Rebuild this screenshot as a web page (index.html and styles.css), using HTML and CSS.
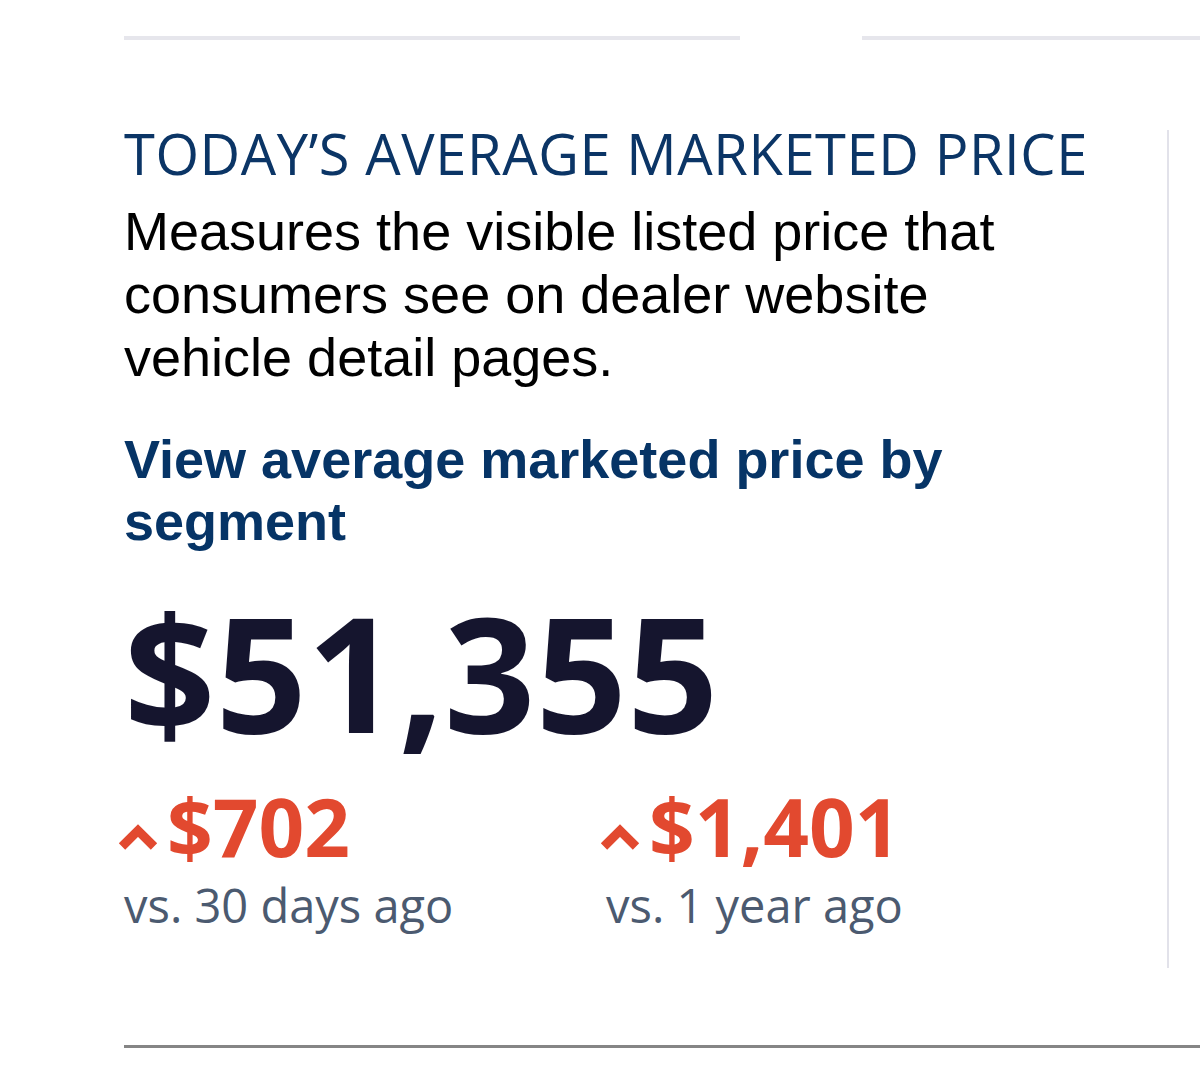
FILE: index.html
```html
<!DOCTYPE html>
<html lang="en">
<head>
    <meta charset="UTF-8">
    <meta name="viewport" content="width=device-width, initial-scale=1.0">
    <title>Average Marketed Price</title>
    <link rel="stylesheet" href="styles.css">
</head>
<body>
    <div class="page">
        <div class="top-rules">
            <span class="rule rule-left"></span>
            <span class="rule rule-right"></span>
        </div>

        <div class="stat-card">
            <h2 class="stat-title">TODAY&rsquo;S AVERAGE MARKETED PRICE</h2>
            <p class="stat-desc">Measures the visible listed price that consumers see on dealer website vehicle detail pages.</p>
            <a class="stat-link" href="#">View average marketed price by segment</a>

            <div class="stat-value">$51,355</div>

            <div class="changes">
                <div class="change">
                    <div class="change-amount">
                        <svg class="caret" width="40" height="28" viewBox="0 0 40 28">
                            <polyline points="4,23.5 20,7.5 36,23.5" fill="none" stroke="#e2492f" stroke-width="9"/>
                        </svg>
                        <span>$702</span>
                    </div>
                    <div class="change-label">vs. 30 days ago</div>
                </div>
                <div class="change">
                    <div class="change-amount">
                        <svg class="caret" width="40" height="28" viewBox="0 0 40 28">
                            <polyline points="4,23.5 20,7.5 36,23.5" fill="none" stroke="#e2492f" stroke-width="9"/>
                        </svg>
                        <span>$1,401</span>
                    </div>
                    <div class="change-label">vs. 1 year ago</div>
                </div>
            </div>
        </div>

        <hr class="bottom-rule">
    </div>
</body>
</html>
```

FILE: styles.css
```css
body {
    margin: 0;
    background: #ffffff;
    font-family: "Open Sans", Arial, sans-serif;
}

.page {
    padding-left: 124px;
    padding-top: 36px;
    overflow: hidden;
}

.top-rules {
    display: flex;
    gap: 122px;
}

.rule {
    height: 4px;
    background: #e6e6ec;
}

.rule-left {
    width: 616px;
}

.rule-right {
    flex: 1;
}

.stat-card {
    display: flow-root;
    width: 1043px;
    margin-top: 90px;
    height: 838px;
    border-right: 2px solid #e2e2ea;
}

.stat-title {
    margin: -4px 0 0;
    font-size: 56px;
    line-height: 54px;
    font-weight: 400;
    color: #0b3566;
    letter-spacing: 0.6px;
}

.stat-desc {
    margin: 20px 0 0;
    width: 900px;
    font-family: "Liberation Sans", Arial, sans-serif;
    font-size: 54px;
    line-height: 63px;
    color: #000000;
}

.stat-link {
    display: block;
    margin-top: 39px;
    width: 900px;
    font-family: "Liberation Sans", Arial, sans-serif;
    font-size: 54px;
    line-height: 62px;
    font-weight: 700;
    color: #063466;
    text-decoration: none;
}

.stat-value {
    margin-top: 34px;
    font-size: 160px;
    line-height: 170px;
    font-weight: 700;
    color: #15152e;
}

.changes {
    display: grid;
    grid-template-columns: 482px auto;
    margin-top: 25px;
}

.change-amount {
    display: flex;
    align-items: center;
    gap: 9px;
    margin-left: -6px;
    font-size: 80px;
    line-height: 90px;
    font-weight: 700;
    color: #e2492f;
}

.caret {
    flex: none;
    align-self: flex-end;
    margin-bottom: 20px;
}

.change-label {
    font-size: 47px;
    line-height: 68px;
    color: #4b5a70;
}

.bottom-rule {
    margin: 77px 0 0;
    border: none;
    border-top: 3px solid #858585;
}
```
